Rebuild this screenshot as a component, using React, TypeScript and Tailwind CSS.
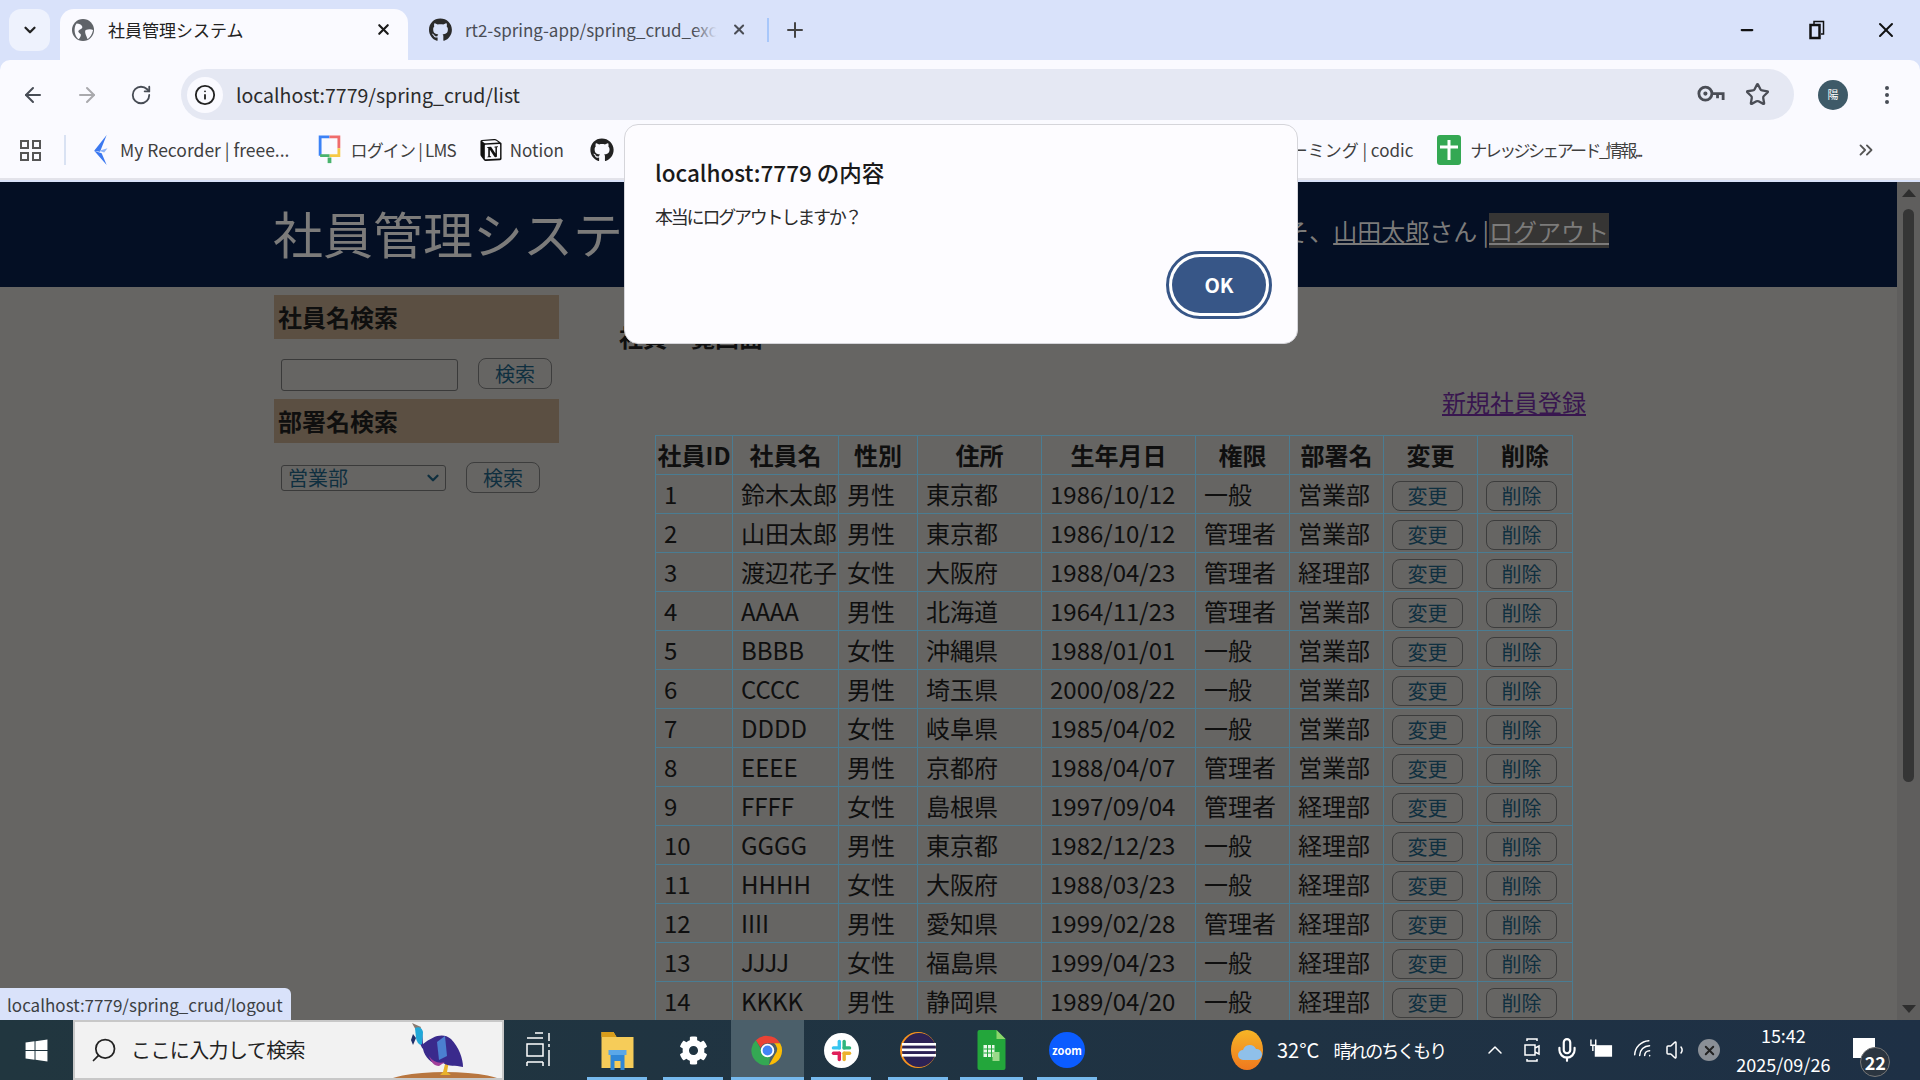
import React from "react";
import { ArrowLeft, ArrowRight, RotateCw, Star, Info, X, Plus, ChevronDown, EllipsisVertical, ChevronsRight, Search, Minus, ChevronUp, Mic, Volume1, Wifi } from "lucide-react";
import { FaGithub, FaWindows, FaCog } from "react-icons/fa";
import { SiNotion } from "react-icons/si";

const employees = [
  ["1", "鈴木太郎", "男性", "東京都", "1986/10/12", "一般", "営業部"],
  ["2", "山田太郎", "男性", "東京都", "1986/10/12", "管理者", "営業部"],
  ["3", "渡辺花子", "女性", "大阪府", "1988/04/23", "管理者", "経理部"],
  ["4", "AAAA", "男性", "北海道", "1964/11/23", "管理者", "営業部"],
  ["5", "BBBB", "女性", "沖縄県", "1988/01/01", "一般", "営業部"],
  ["6", "CCCC", "男性", "埼玉県", "2000/08/22", "一般", "営業部"],
  ["7", "DDDD", "女性", "岐阜県", "1985/04/02", "一般", "営業部"],
  ["8", "EEEE", "男性", "京都府", "1988/04/07", "管理者", "営業部"],
  ["9", "FFFF", "女性", "島根県", "1997/09/04", "管理者", "経理部"],
  ["10", "GGGG", "男性", "東京都", "1982/12/23", "一般", "経理部"],
  ["11", "HHHH", "女性", "大阪府", "1988/03/23", "一般", "経理部"],
  ["12", "IIII", "男性", "愛知県", "1999/02/28", "管理者", "経理部"],
  ["13", "JJJJ", "女性", "福島県", "1999/04/23", "一般", "経理部"],
  ["14", "KKKK", "男性", "静岡県", "1989/04/20", "一般", "経理部"],
];

const headers = ["社員ID", "社員名", "性別", "住所", "生年月日", "権限", "部署名", "変更", "削除"];

const thClass = "border border-[#4a7c92] font-bold text-[24px] leading-none text-center text-[#0f0f0f] p-0";
const tdClass = "border border-[#4a7c92] text-[24px] leading-none text-[#0f0f0f] pl-2 pr-0 py-0 whitespace-nowrap";
const btnClass = "block mt-[4px] w-[71px] h-[30px] border border-[#3d3d3d] rounded-lg text-[20px] leading-none text-[#0f2f3f]";
const searchBtnClass = "ml-[20px] w-[74px] h-[31px] border border-[#3d3d3d] rounded-lg text-[20px] leading-none text-[#0f2f3f]";
const taskUnderline = "absolute bottom-0 left-0 right-0 h-[3px] bg-[#76b9ed]";

const ChromeLogo = () => (
  <svg viewBox="0 0 48 48" className="w-[35px] h-[35px]">
    <path d="M24 4a20 20 0 0 1 17.3 10H24a10 10 0 0 0-9.3 6.3L8 9.9A20 20 0 0 1 24 4z" fill="#ea4335" />
    <path d="M41.3 14A20 20 0 0 1 26 43.9l8.7-15A10 10 0 0 0 33 14z" fill="#fbbc05" />
    <path d="M26 43.9A20 20 0 0 1 8 9.9l8.5 14.7a10 10 0 0 0 11 6.9z" fill="#34a853" />
    <circle cx="24" cy="24" r="8" fill="#4285f4" stroke="#fff" strokeWidth="2.5" />
  </svg>
);

const SlackLogo = () => (
  <svg viewBox="0 0 36 36" className="w-[35px] h-[35px]">
    <circle cx="18" cy="18" r="18" fill="#fff" />
    <rect x="14" y="7" width="3.5" height="10" rx="1.7" fill="#36c5f0" />
    <rect x="8" y="13.5" width="9.5" height="3.5" rx="1.7" fill="#36c5f0" />
    <rect x="19" y="7" width="3.5" height="10" rx="1.7" fill="#2eb67d" />
    <rect x="19" y="13.5" width="9" height="3.5" rx="1.7" fill="#2eb67d" />
    <rect x="8" y="19" width="9.5" height="3.5" rx="1.7" fill="#e01e5a" />
    <rect x="14" y="19" width="3.5" height="10" rx="1.7" fill="#e01e5a" />
    <rect x="19" y="19" width="9" height="3.5" rx="1.7" fill="#ecb22e" />
    <rect x="19" y="19" width="3.5" height="10" rx="1.7" fill="#ecb22e" />
  </svg>
);

const EclipseLogo = () => (
  <svg viewBox="0 0 36 36" className="w-[36px] h-[36px]">
    <circle cx="18" cy="18" r="18" fill="#f7941e" />
    <circle cx="19" cy="18" r="17" fill="#2c2255" />
    <rect x="2" y="11" width="34" height="2.6" fill="#fff" />
    <rect x="2" y="16.5" width="34" height="2.6" fill="#fff" />
    <rect x="2" y="22" width="34" height="2.6" fill="#fff" />
  </svg>
);

const SheetFile = () => (
  <svg viewBox="0 0 28 40" className="w-[29px] h-[40px]">
    <path d="M2 0h17l9 9v29a2 2 0 0 1-2 2H2a2 2 0 0 1-2-2V2a2 2 0 0 1 2-2z" fill="#23a63b" />
    <path d="M19 0l9 9h-9z" fill="#8bd66b" />
    <rect x="6" y="15" width="11" height="12" fill="#e9f7e9" />
    <path d="M6 19h11M6 23h11M10 15v12M14 15v12" stroke="#23a63b" strokeWidth="1" />
    <rect x="15" y="22" width="7" height="9" fill="#9bd98a" />
  </svg>
);

const FolderIcon = () => (
  <svg viewBox="0 0 32 40" className="w-[33px] h-[40px]">
    <path d="M0 2h12l3 5h17v31H0z" fill="#f6cc59" />
    <path d="M0 2h12l3 5H0z" fill="#d99e1c" />
    <path d="M9 40V24h14v16h-4v-9h-6v9z" fill="#2f86d6" />
    <rect x="7" y="20" width="18" height="5" fill="#5aa7e8" />
  </svg>
);

const Bird = () => (
  <svg viewBox="0 0 121 56" className="absolute left-[310px] bottom-0 w-[121px] h-[56px]">
    <ellipse cx="60" cy="62" rx="60" ry="12" fill="#b8763f" />
    <path d="M58 50l3-12 3 1-2 11 4 3H55z" fill="#e9b22a" />
    <path d="M30 3l7 5 1 14c10-8 20-12 28-5 8 8 12 20 12 28-8-2-14 0-20-4-8 4-18-4-20-14-3-4-5-10-8-24z" fill="#3a2a8c" />
    <path d="M27 1l9 4-3 7z" fill="#8a7a70" />
    <path d="M30 6c4-2 7 0 8 4l-1 12c-3 2-5-2-6-6z" fill="#21a8d8" />
    <path d="M28 12l3 4-3 7-2-5z" fill="#1f2f6a" />
    <path d="M52 20l8-6 2 20-8 4z" fill="#4b7fd0" />
    <path d="M44 34c4 6 10 8 16 6l-6 4c-5 0-8-4-10-10z" fill="#a23f9a" />
  </svg>
);

const WeatherIcon = () => (
  <svg viewBox="0 0 32 40" className="w-[32px] h-[40px]">
    <defs>
      <linearGradient id="sun" x1="0" y1="0" x2="0" y2="1">
        <stop offset="0" stopColor="#f6b526" />
        <stop offset="1" stopColor="#f0781e" />
      </linearGradient>
    </defs>
    <ellipse cx="16" cy="20" rx="16" ry="20" fill="url(#sun)" />
    <path d="M12 30a5 5 0 0 1 0-10 7 7 0 0 1 13-1 5.5 5.5 0 0 1 1 11z" fill="#8fc0ea" />
  </svg>
);

// 上部のタブとツールバー
const BrowserChrome = () => (
  <div className="h-[182px] shrink-0 bg-[#d9e2fa] text-[#3c4043]">
    <div className="h-[60px] flex items-end relative">
      <div className="absolute left-[9px] top-[9px] w-[41px] h-[42px] rounded-xl bg-[#eef2fd] flex items-center justify-center">
        <ChevronDown size={18} strokeWidth={3} className="text-[#222]" />
      </div>
      <div className="ml-[60px] w-[348px] h-[51px] bg-[#fafaff] rounded-t-[14px] flex items-center pl-[12px] pb-[10px]">
        <svg viewBox="0 0 24 24" className="w-[22px] h-[28px]">
          <circle cx="12" cy="12" r="12" fill="#5f6368" />
          <path d="M5 5c3 0 5 1 6 3s-1 3-3 4-1 3 1 4-1 6-2 6c-4-3-6-12-2-17zM15 12c3-1 6-1 8 0-1 5-3 8-6 10-1-3-4-8-2-10z" fill="#fafaff" />
        </svg>
        <span className="ml-[14px] text-[17px] text-[#222] flex-1">社員管理システム</span>
        <X size={17} strokeWidth={3} className="mr-[16px] text-[#1a1a1a]" />
      </div>
      <div className="w-[361px] h-[51px] flex items-center pl-[21px] pb-[10px]">
        <FaGithub size={24} className="text-[#2b2b2b]" />
        <div className="relative ml-[13px] w-[252px]">
          <span className="text-[17px] text-[#4a4d55] whitespace-nowrap">rt2-spring-app/spring_crud_exc</span>
          <div className="absolute right-0 top-0 bottom-0 w-[24px] bg-gradient-to-r from-transparent to-[#d9e2fa]" />
        </div>
        <X size={17} strokeWidth={3} className="ml-[14px] text-[#4a4d55]" />
        <div className="ml-[20px] w-[2px] h-[24px] bg-[#a8c7fa]" />
      </div>
      <div className="ml-[6px] w-[40px] h-[51px] flex items-center justify-center pb-[10px]">
        <Plus size={24} strokeWidth={2} className="text-[#444]" />
      </div>
      <div className="ml-auto h-[60px] flex items-center text-[#111]">
        <Minus size={18} strokeWidth={3} className="mr-[53px]" />
        <svg viewBox="0 0 16 20" className="w-[16px] h-[20px] mr-[49px]" fill="none" stroke="currentColor" strokeWidth="2.5">
          <rect x="1.5" y="5" width="9" height="13" />
          <path d="M5 4V1.5h9.5V14H12" strokeWidth="1.5" />
        </svg>
        <X size={24} strokeWidth={2} className="mr-[22px]" />
      </div>
    </div>
    <div className="h-[120px] bg-[#fafaff] rounded-t-[10px] flex flex-col border-b-2 border-[#e3e3ea]">
      <div className="h-[60px] flex items-center shrink-0">
        <ArrowLeft size={24} className="ml-[21px] mt-[9px] text-[#474c55]" />
        <ArrowRight size={24} className="ml-[30px] mt-[9px] text-[#a9a9ad]" />
        <RotateCw size={22} className="ml-[31px] mt-[9px] text-[#474c55]" />
        <div className="ml-[29px] w-[1613px] h-[51px] mt-[9px] rounded-full bg-[#e5e8f3] flex items-center pl-[6px]">
          <div className="w-[36px] h-[36px] rounded-full bg-[#fafaff] flex items-center justify-center">
            <Info size={22} className="text-[#222]" />
          </div>
          <span className="ml-[13px] text-[19.5px] text-[#2b2b2b] flex-1">localhost:7779/spring_crud/list</span>
          <svg viewBox="0 0 30 22" className="w-[28px] h-[21px] mr-[20px]" fill="none" stroke="#4a4d55" strokeWidth="3">
            <circle cx="9" cy="10" r="7" />
            <circle cx="9" cy="10" r="1.5" fill="#4a4d55" strokeWidth="1.5" />
            <path d="M16 10h12v7M22 10v5" />
          </svg>
          <Star size={25} strokeWidth={2.2} className="mr-[24px] text-[#4a4d55]" />
        </div>
        <div className="ml-[24px] mt-[9px] w-[30px] h-[30px] rounded-full bg-[#3e5a68] flex items-center justify-center text-[11px] text-white">陽</div>
        <EllipsisVertical size={24} className="ml-[27px] mt-[9px] text-[#474c55]" />
      </div>
      <div className="flex-1 flex items-center text-[17px] text-[#3f3f3f] whitespace-nowrap pt-[2px]">
        <div className="ml-[20px] w-[21px] h-[21px] grid grid-cols-2 gap-[3px]">
          <div className="border-2 border-[#555]" />
          <div className="border-2 border-[#555]" />
          <div className="border-2 border-[#555]" />
          <div className="border-2 border-[#555]" />
        </div>
        <div className="ml-[23px] w-[2px] h-[30px] bg-[#d9e2f3]" />
        <svg viewBox="0 0 20 36" className="ml-[24px] w-[20px] h-[30px]">
          <path d="M18 0L3 19l7 1zM3 19l15 17-6-14z" fill="#3b78f0" />
          <path d="M9 19l10-3-4 5z" fill="#8fb4f7" />
        </svg>
        <span className="ml-[10px] text-[17.5px]">My Recorder | freee...</span>
        <svg viewBox="0 0 24 32" className="ml-[28px] w-[25px] h-[30px]" fill="none" strokeWidth="3">
          <path d="M2 22V2h10" stroke="#3b82f6" />
          <path d="M12 2h10v12" stroke="#ef6c6c" />
          <path d="M22 14v8H12" stroke="#f6c945" />
          <path d="M12 22H2" stroke="#49b36d" />
          <path d="M12 24v6" stroke="#49b36d" strokeWidth="4" />
        </svg>
        <span className="ml-[8px] tracking-[-0.8px]">ログイン | LMS</span>
        <SiNotion size={22} className="ml-[24px] text-[#111]" />
        <span className="ml-[8px]">Notion</span>
        <FaGithub size={24} className="ml-[26px] text-[#222]" />
        <span className="ml-auto">命名規則 ネーミング | codic</span>
        <svg viewBox="0 0 24 30" className="ml-[24px] w-[24px] h-[30px]">
          <rect width="24" height="30" rx="3" fill="#34a853" />
          <path d="M12 5v20M3 12h18" stroke="#fff" strokeWidth="3" />
        </svg>
        <span className="ml-[9px] tracking-[-2.6px]">ナレッジシェアード_情報...</span>
        <ChevronsRight size={22} className="ml-[214px] mr-[43px] text-[#555]" />
      </div>
    </div>
  </div>
);

const Sidebar = () => (
  <div className="w-[285px] shrink-0 pt-[8px]">
    <h3 className="h-[44px] bg-[#5b4f42] pl-1 text-[24px] font-bold leading-[44px] text-[#0f0f0f]">社員名検索</h3>
    <div className="flex items-start pl-[7px] pt-[19px] h-[60px]">
      <div className="w-[177px] h-[32px] mt-[1px] border border-[#3a3a3a] rounded-[3px]" />
      <button className={searchBtnClass}>検索</button>
    </div>
    <h3 className="h-[44px] bg-[#5b4f42] pl-1 text-[24px] font-bold leading-[44px] text-[#0f0f0f]">部署名検索</h3>
    <div className="flex items-center pl-[7px] pt-[19px]">
      <div className="w-[165px] h-[26px] border border-[#3a3a3a] rounded-[3px] flex items-center pl-[6px] text-[20px] leading-none text-[#0f2f3f]">
        <span className="flex-1">営業部</span>
        <ChevronDown size={18} strokeWidth={3} className="mr-[3px]" />
      </div>
      <button className={searchBtnClass}>検索</button>
    </div>
  </div>
);

const EmployeeTable = () => (
  <table className="ml-[36px] mt-[16px] w-[917px] table-fixed border-collapse">
    <colgroup>
      <col className="w-[77px]" />
      <col className="w-[106px]" />
      <col className="w-[79px]" />
      <col className="w-[124px]" />
      <col className="w-[154px]" />
      <col className="w-[94px]" />
      <col className="w-[94px]" />
      <col className="w-[94px]" />
      <col className="w-[95px]" />
    </colgroup>
    <thead>
      <tr className="h-[39px]">
        {headers.map((h) => (
          <th key={h} className={thClass}>{h}</th>
        ))}
      </tr>
    </thead>
    <tbody>
      {employees.map((row) => (
        <tr key={row[0]} className="h-[39px]">
          {row.map((cell, i) => (
            <td key={i} className={tdClass}>{cell}</td>
          ))}
          <td className={tdClass}><button className={btnClass}>変更</button></td>
          <td className={tdClass}><button className={btnClass}>削除</button></td>
        </tr>
      ))}
    </tbody>
  </table>
);

const Page = () => (
  <div className="flex-1 flex min-h-0 bg-[#666563]">
    <div className="flex-1 min-w-0">
      <div className="h-[105px] bg-[#040f24] flex items-center justify-between pl-[273px] pr-[288px] text-[#7c7b7a]">
        <h1 className="text-[50px] leading-none pb-[5px]">社員管理システム</h1>
        <div className="text-[24px] leading-none flex items-center mb-[8px]">
          <span>ようこそ、</span>
          <span className="underline">山田太郎</span>
          <span>さん |</span>
          <span className="underline bg-[#363534] h-[35px] leading-[35px]">ログアウト</span>
        </div>
      </div>
      <div className="flex pl-[274px]">
        <Sidebar />
        <div className="ml-[60px] w-[967px]">
          <h2 className="mt-[33px] text-[24px] font-bold leading-[34px] text-[#0f0f0f]">社員一覧画面</h2>
          <div className="mt-[31px] text-right">
            <a className="text-[24px] underline leading-[34px] text-[#38164f]">新規社員登録</a>
          </div>
          <EmployeeTable />
        </div>
      </div>
    </div>
    <div className="w-[23px] shrink-0 bg-[#5f5e5d] flex flex-col items-center">
      <div className="mt-[7px] w-0 h-0 border-x-[7px] border-x-transparent border-b-[8px] border-b-[#2e2e2e]" />
      <div className="mt-[12px] w-[11px] h-[573px] rounded-full bg-[#353535]" />
      <div className="mt-auto mb-[7px] w-0 h-0 border-x-[7px] border-x-transparent border-t-[8px] border-t-[#2e2e2e]" />
    </div>
  </div>
);

const Taskbar = () => (
  <div className="h-[60px] shrink-0 relative flex items-center bg-gradient-to-r from-[#21363f] to-[#1e3045] text-white">
    <div className="w-[73px] flex justify-center">
      <FaWindows size={25} />
    </div>
    <div className="relative w-[431px] h-[60px] bg-[#f2f2f2] border-2 border-[#c8c8c8] flex items-center pl-[15px] text-[#222] overflow-hidden">
      <Search size={28} strokeWidth={1.5} className="-scale-x-100" />
      <span className="ml-[13px] text-[20px] tracking-[-0.6px]">ここに入力して検索</span>
      <Bird />
    </div>
    <div className="w-[83px] flex justify-center pr-[16px]">
      <svg viewBox="0 0 26 40" className="w-[26px] h-[40px]" fill="none" stroke="#fff" strokeWidth="1.5">
        <path d="M10 3h8M2 8h16M2 14h16v12H2zM2 32h16M2 32v4M18 32v4" />
        <path d="M24 3v8M24 14v3M24 20v16" />
      </svg>
    </div>
    <div className="w-[60px] h-[60px] flex justify-center items-center relative">
      <FolderIcon />
      <div className={taskUnderline} />
    </div>
    <div className="ml-[16px] w-[60px] h-[60px] flex justify-center items-center relative">
      <FaCog size={29} />
      <div className={taskUnderline} />
    </div>
    <div className="ml-[8px] w-[73px] h-[60px] bg-[#4b5f6a] flex justify-center items-center relative">
      <ChromeLogo />
      <div className={taskUnderline} />
    </div>
    <div className="ml-[7px] w-[60px] h-[60px] flex justify-center items-center relative">
      <SlackLogo />
      <div className={taskUnderline} />
    </div>
    <div className="ml-[17px] w-[60px] h-[60px] flex justify-center items-center relative">
      <EclipseLogo />
      <div className={taskUnderline} />
    </div>
    <div className="ml-[12px] w-[63px] h-[60px] flex justify-center items-center relative">
      <SheetFile />
      <div className={taskUnderline} />
    </div>
    <div className="ml-[14px] w-[60px] h-[60px] flex justify-center items-center relative">
      <div className="w-[36px] h-[36px] rounded-full bg-[#0b5cff] flex items-center justify-center text-[11px] font-bold">zoom</div>
      <div className={taskUnderline} />
    </div>
    <div className="ml-[134px]">
      <WeatherIcon />
    </div>
    <span className="ml-[14px] text-[20px] whitespace-nowrap">32°C</span>
    <span className="ml-[14px] text-[18px] tracking-[-2px] whitespace-nowrap">晴れのちくもり</span>
    <ChevronUp size={24} strokeWidth={1.5} className="ml-[38px]" />
    <svg viewBox="0 0 16 26" className="ml-[17px] w-[16px] h-[26px]" fill="none" stroke="#fff" strokeWidth="1.5">
      <path d="M3 4V2h10v2M3 22v2h10v-2M1 8h10v10H1zM11 11l4-2v8l-4-2" />
    </svg>
    <Mic size={26} className="ml-[14px]" />
    <svg viewBox="0 0 26 26" className="ml-[9px] w-[25px] h-[26px]">
      <rect x="6" y="8" width="18" height="12" fill="#fff" />
      <path d="M2 2v6h5V2M4 8v6" stroke="#fff" strokeWidth="1.5" fill="none" />
    </svg>
    <Wifi size={24} strokeWidth={1.5} className="ml-[18px] -rotate-45" />
    <Volume1 size={24} strokeWidth={1.5} className="ml-[9px]" />
    <div className="ml-[9px] w-[22px] h-[22px] rounded-full bg-[#8a8f96] flex items-center justify-center">
      <X size={15} strokeWidth={3} className="text-[#222]" />
    </div>
    <div className="ml-[13px] w-[100px] text-center text-[18px] leading-[29px]">
      <div>15:42</div>
      <div>2025/09/26</div>
    </div>
    <div className="relative ml-[20px] w-[37px] h-[60px]">
      <div className="absolute left-0 top-[18px] w-[22px] h-[20px] bg-white" />
      <div className="absolute left-[7px] top-[27px] w-[30px] h-[30px] rounded-full bg-[#2b3540] border border-[#777] flex items-center justify-center text-[18px] font-bold">22</div>
    </div>
  </div>
);

const ConfirmDialog = () => (
  <div className="absolute left-[624px] top-[124px] w-[674px] h-[220px] bg-[#fdfcff] rounded-[14px] border border-[#d5d5da] pl-[30px] pt-[31px] text-[#1a1a1a]">
    <div className="text-[22.5px] font-medium leading-[32px]">localhost:7779 の内容</div>
    <div className="mt-[15px] text-[18px] tracking-[-2.2px] leading-[26px] text-[#2b2b2b]">本当にログアウトしますか？</div>
    <button className="absolute right-[25px] bottom-[24px] w-[106px] h-[68px] rounded-[34px] border-[3px] border-[#375687] bg-white p-[3px]">
      <span className="flex w-full h-full rounded-[28px] bg-[#375687] items-center justify-center text-white text-[20px] font-bold">OK</span>
    </button>
  </div>
);

const App = () => (
  <div className="relative w-[1920px] h-[1080px] overflow-hidden flex flex-col font-['Noto_Sans_CJK_JP','Noto_Sans',sans-serif]">
    <BrowserChrome />
    <Page />
    <Taskbar />
    <ConfirmDialog />
    <div className="absolute left-0 top-[988px] w-[291px] h-[32px] bg-[#d9e2fa] rounded-tr-md pl-[7px] text-[17px] leading-[34px] text-[#3c4043] whitespace-nowrap">localhost:7779/spring_crud/logout</div>
  </div>
);

export default App;
